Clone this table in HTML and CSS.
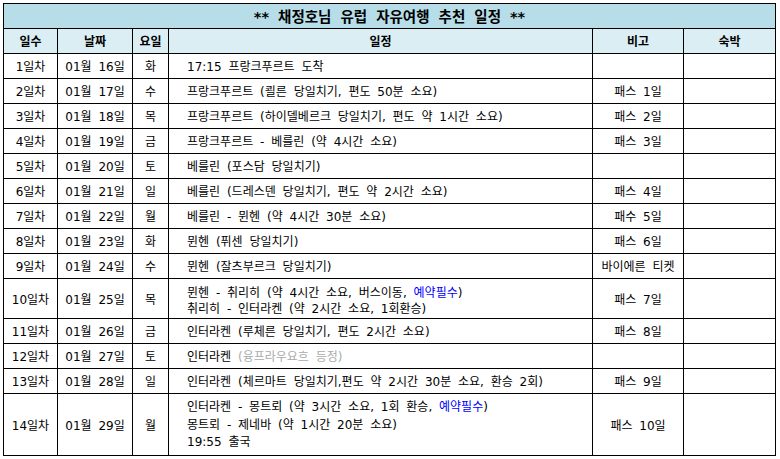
FILE: index.html
```html
<!DOCTYPE html>
<html lang="ko">
<head>
<meta charset="utf-8">
<link rel="stylesheet" href="styles.css">
</head>
<body>
<table class="plan">
  <colgroup>
    <col class="c-day"><col class="c-date"><col class="c-wd"><col class="c-plan"><col class="c-note"><col class="c-stay">
  </colgroup>
  <tr class="title"><td colspan="6">** 채정호님 유럽 자유여행 추천 일정 **</td></tr>
  <tr class="head"><th>일수</th><th>날짜</th><th>요일</th><th>일정</th><th>비고</th><th>숙박</th></tr>
  <tr><td class="ctr">1일차</td><td class="ctr">01월 16일</td><td class="ctr">화</td><td class="txt">17:15 프랑크푸르트 도착</td><td class="ctr"></td><td></td></tr>
  <tr><td class="ctr">2일차</td><td class="ctr">01월 17일</td><td class="ctr">수</td><td class="txt">프랑크푸르트 (쾰른 당일치기, 편도 50분 소요)</td><td class="ctr">패스 1일</td><td></td></tr>
  <tr><td class="ctr">3일차</td><td class="ctr">01월 18일</td><td class="ctr">목</td><td class="txt">프랑크푸르트 (하이델베르크 당일치기, 편도 약 1시간 소요)</td><td class="ctr">패스 2일</td><td></td></tr>
  <tr><td class="ctr">4일차</td><td class="ctr">01월 19일</td><td class="ctr">금</td><td class="txt">프랑크푸르트 - 베를린 (약 4시간 소요)</td><td class="ctr">패스 3일</td><td></td></tr>
  <tr><td class="ctr">5일차</td><td class="ctr">01월 20일</td><td class="ctr">토</td><td class="txt">베를린 (포스담 당일치기)</td><td class="ctr"></td><td></td></tr>
  <tr><td class="ctr">6일차</td><td class="ctr">01월 21일</td><td class="ctr">일</td><td class="txt">베를린 (드레스덴 당일치기, 편도 약 2시간 소요)</td><td class="ctr">패스 4일</td><td></td></tr>
  <tr><td class="ctr">7일차</td><td class="ctr">01월 22일</td><td class="ctr">월</td><td class="txt">베를린 - 뮌헨 (약 4시간 30분 소요)</td><td class="ctr">패수 5일</td><td></td></tr>
  <tr><td class="ctr">8일차</td><td class="ctr">01월 23일</td><td class="ctr">화</td><td class="txt">뮌헨 (퓌센 당일치기)</td><td class="ctr">패스 6일</td><td></td></tr>
  <tr><td class="ctr">9일차</td><td class="ctr">01월 24일</td><td class="ctr">수</td><td class="txt">뮌헨 (잘츠부르크 당일치기)</td><td class="ctr">바이에른 티켓</td><td></td></tr>
  <tr class="r2"><td class="ctr">10일차</td><td class="ctr">01월 25일</td><td class="ctr">목</td><td class="txt ml">뮌헨 - 취리히 (약 4시간 소요, 버스이동, <span class="must">예약필수</span>)<br>취리히 - 인터라켄 (약 2시간 소요, 1회환승)</td><td class="ctr">패스 7일</td><td></td></tr>
  <tr><td class="ctr">11일차</td><td class="ctr">01월 26일</td><td class="ctr">금</td><td class="txt">인터라켄 (루체른 당일치기, 편도 2시간 소요)</td><td class="ctr">패스 8일</td><td></td></tr>
  <tr><td class="ctr">12일차</td><td class="ctr">01월 27일</td><td class="ctr">토</td><td class="txt">인터라켄 <span class="dim">(융프라우요흐 등정)</span></td><td class="ctr"></td><td></td></tr>
  <tr><td class="ctr">13일차</td><td class="ctr">01월 28일</td><td class="ctr">일</td><td class="txt">인터라켄 (체르마트 당일치기,편도 약 2시간 30분 소요, 환승 2회)</td><td class="ctr">패스 9일</td><td></td></tr>
  <tr class="r3"><td class="ctr">14일차</td><td class="ctr">01월 29일</td><td class="ctr">월</td><td class="txt ml3">인터라켄 - 몽트뢰 (약 3시간 소요, 1회 환승, <span class="must">예약필수</span>)<br>몽트뢰 - 제네바 (약 1시간 20분 소요)<br>19:55 출국</td><td class="ctr">패스 10일</td><td></td></tr>
</table>
</body>
</html>
```
FILE: styles.css
```css
html, body {
  margin: 0;
  padding: 0;
  background: #ffffff;
}
body {
  padding: 3px 0 0 3px;
  font-family: "DejaVu Sans", "Noto Sans CJK KR", sans-serif;
  font-size: 12px;
  word-spacing: 3px;
  color: #000000;
}
.plan {
  border-collapse: collapse;
  table-layout: fixed;
  width: 773px;
  border: 1px solid #000;
}
.c-day { width: 54px; }
.c-date { width: 75px; }
.c-wd { width: 36px; }
.c-plan { width: 424px; }
.c-note { width: 91px; }
.c-stay { width: 92px; }
.plan tr { height: 25px; }
.plan tr.r2 { height: 40px; }
.plan tr.r3 { height: 62px; }
.plan td, .plan th {
  border: 1px solid #000;
  padding: 2px 0 0 0;
  line-height: 16px;
  vertical-align: middle;
  white-space: nowrap;
  overflow: hidden;
}
.plan .title td {
  background: #b7dee8;
  text-align: center;
  font-weight: bold;
  font-size: 14.5px;
  word-spacing: 4px;
  padding-top: 1px;
}
.plan .head th {
  background: #daeef3;
  font-weight: bold;
  text-align: center;
  font-size: 12px;
}
.plan .ctr {
  text-align: center;
}
.plan .txt {
  text-align: left;
  padding-left: 18px;
}
.plan .ml { padding-top: 4px; }
.plan .ml3 { line-height: 17.5px; padding-top: 2px; }
.must { color: #0000ff; }
.dim { color: #aaaaaa; }
```
